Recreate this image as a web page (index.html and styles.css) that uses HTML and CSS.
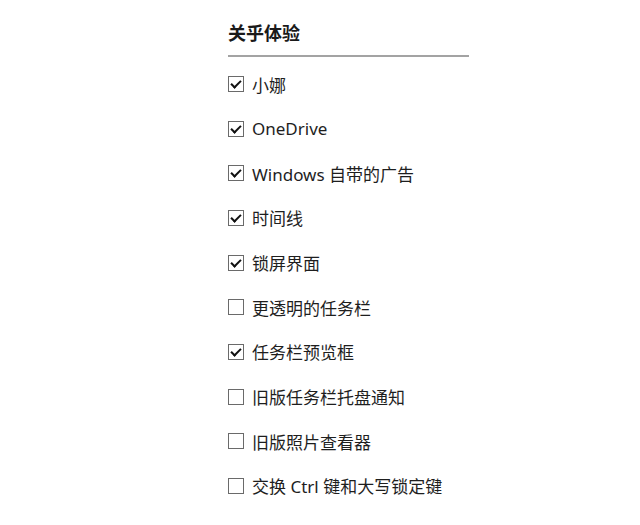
FILE: index.html
```html
<!DOCTYPE html>
<html lang="zh-CN">
<head>
    <meta charset="UTF-8">
    <meta name="viewport" content="width=device-width, initial-scale=1.0">
    <title>关乎体验</title>
    <link rel="stylesheet" href="styles.css">
</head>
<body>
    <div class="panel">
        <h2 class="panel-title">关乎体验</h2>
        <ul class="options">
            <li class="option checked"><span class="box"></span>小娜</li>
            <li class="option checked"><span class="box"></span>OneDrive</li>
            <li class="option checked"><span class="box"></span>Windows 自带的广告</li>
            <li class="option checked"><span class="box"></span>时间线</li>
            <li class="option checked"><span class="box"></span>锁屏界面</li>
            <li class="option"><span class="box"></span>更透明的任务栏</li>
            <li class="option checked"><span class="box"></span>任务栏预览框</li>
            <li class="option"><span class="box"></span>旧版任务栏托盘通知</li>
            <li class="option"><span class="box"></span>旧版照片查看器</li>
            <li class="option"><span class="box"></span>交换 Ctrl 键和大写锁定键</li>
        </ul>
    </div>
</body>
</html>
```
FILE: styles.css
```css
body {
    margin: 0;
    background: #fff;
    color: #222;
    font-family: "Noto Sans", "Noto Sans CJK SC", sans-serif;
}
.panel {
    width: 241px;
    margin-left: 228px;
}
.panel-title {
    margin: 0;
    padding: 21px 0 10px;
    font-size: 18px;
    line-height: 24px;
    font-weight: bold;
    color: #1a1a1a;
    border-bottom: 2px solid #a3a3a3;
}
.options {
    list-style: none;
    margin: 16px 0 0;
    padding: 0;
    display: flex;
    flex-direction: column;
    gap: 22.67px;
}
.option {
    display: flex;
    align-items: center;
    height: 22px;
    font-size: 17px;
    color: #1e1e1e;
    white-space: nowrap;
}
.box {
    box-sizing: border-box;
    width: 16px;
    height: 16px;
    margin-right: 8px;
    border: 1px solid #6a6a6a;
    background: #fff;
    position: relative;
}
.option.checked .box::after {
    content: "";
    position: absolute;
    left: 4px;
    top: 1px;
    width: 4px;
    height: 8px;
    border: solid #111;
    border-width: 0 2.5px 2.5px 0;
    transform: rotate(45deg);
}
```
